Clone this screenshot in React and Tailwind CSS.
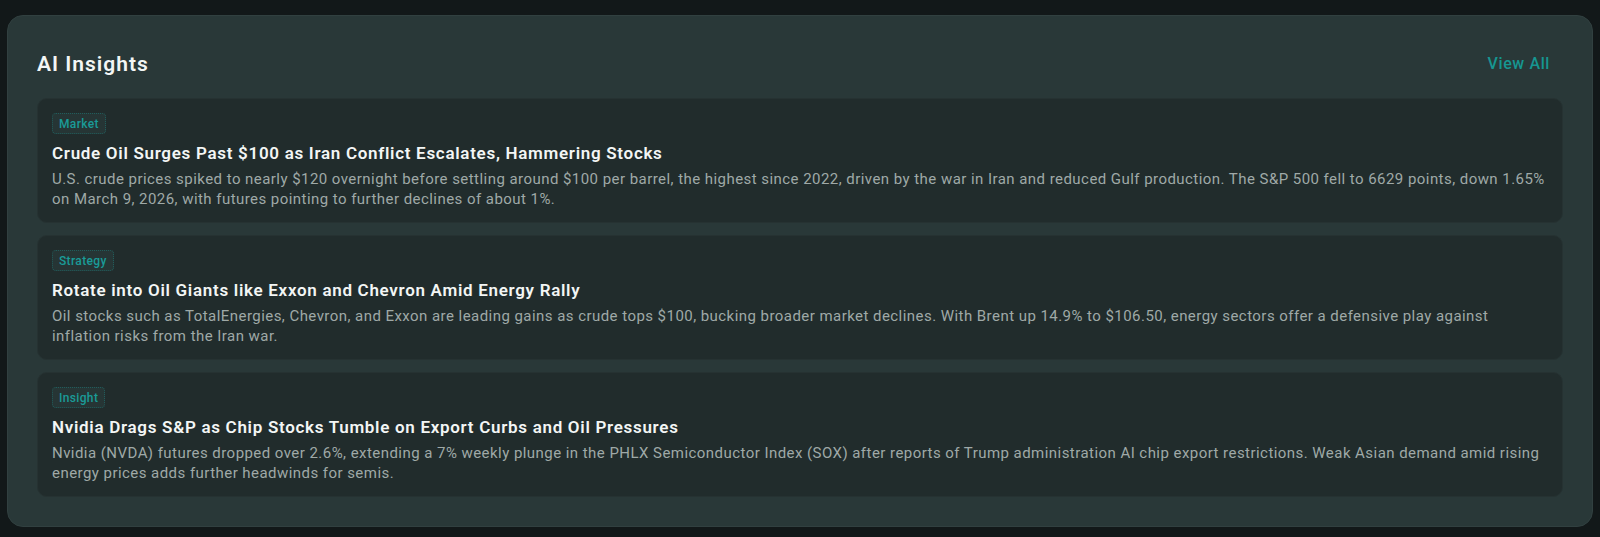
import React from "react";

const insights = [
    {
        tag: "Market",
        title: "Crude Oil Surges Past $100 as Iran Conflict Escalates, Hammering Stocks",
        body: "U.S. crude prices spiked to nearly $120 overnight before settling around $100 per barrel, the highest since 2022, driven by the war in Iran and reduced Gulf production. The S&P 500 fell to 6629 points, down 1.65% on March 9, 2026, with futures pointing to further declines of about 1%.",
    },
    {
        tag: "Strategy",
        title: "Rotate into Oil Giants like Exxon and Chevron Amid Energy Rally",
        body: "Oil stocks such as TotalEnergies, Chevron, and Exxon are leading gains as crude tops $100, bucking broader market declines. With Brent up 14.9% to $106.50, energy sectors offer a defensive play against inflation risks from the Iran war.",
    },
    {
        tag: "Insight",
        title: "Nvidia Drags S&P as Chip Stocks Tumble on Export Curbs and Oil Pressures",
        body: "Nvidia (NVDA) futures dropped over 2.6%, extending a 7% weekly plunge in the PHLX Semiconductor Index (SOX) after reports of Trump administration AI chip export restrictions. Weak Asian demand amid rising energy prices adds further headwinds for semis.",
    },
];

function InsightCard({ item }) {
    return (
        <div className="rounded-[10px] border border-[#263232] bg-[#212c2c] px-3.5 pt-3.5 pb-[13px]">
            <div className="flex">
                <span className="flex h-[21px] items-center rounded-[4px] border border-dotted border-[#1a9b98]/40 bg-[#263535] px-1.5 text-[12px] font-medium tracking-[0.35px] text-[#1a9b98]">
                    {item.tag}
                </span>
            </div>
            <h3 className="mt-[7px] text-[17px] leading-6 font-semibold tracking-[0.7px] text-[#f3f6f5]">
                {item.title}
            </h3>
            <p className="mt-1 pr-px text-[15px] leading-5 tracking-[0.45px] text-[#9fa9a7]">
                {item.body}
            </p>
        </div>
    );
}

export default function App() {
    return (
        <div
            className="min-h-screen bg-[#121819] px-[7px] pt-[15px]"
            style={{ fontFamily: "Roboto, sans-serif" }}
        >
            <div className="rounded-2xl border border-[#314040] bg-[#293838] px-[29px] pt-7 pb-[29px]">
                <div className="mb-[14px] flex h-10 items-center justify-between">
                    <h2 className="text-[21px] leading-7 font-semibold tracking-[1px] text-[#f3f6f5]">
                        AI Insights
                    </h2>
                    <button className="mr-[13px] text-[16px] font-medium tracking-[0.6px] text-[#169691]">
                        View All
                    </button>
                </div>
                <div className="flex flex-col gap-3">
                    {insights.map((item) => (
                        <InsightCard key={item.tag} item={item} />
                    ))}
                </div>
            </div>
        </div>
    );
}
